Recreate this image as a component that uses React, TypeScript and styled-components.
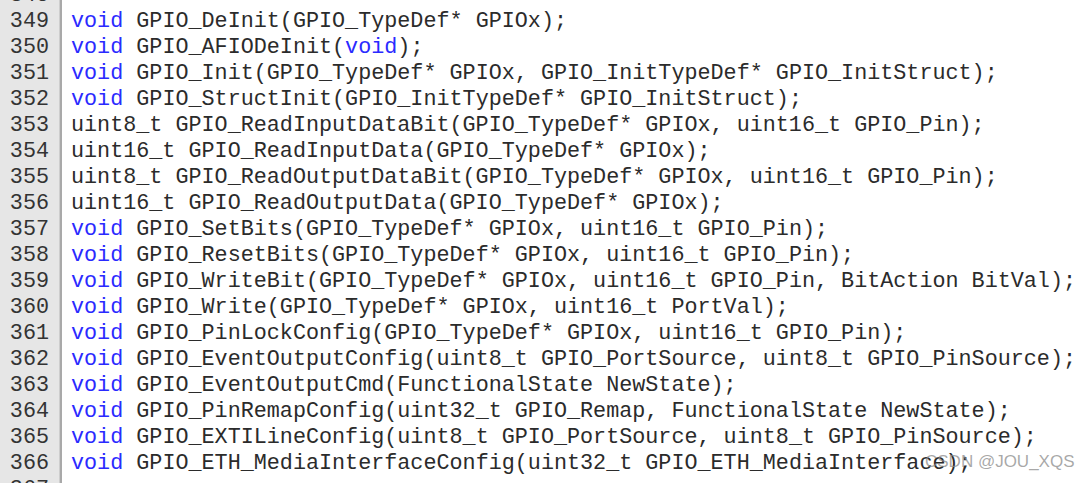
import React from "react";
import styled, { createGlobalStyle } from "styled-components";

const Global = createGlobalStyle`
  html, body {
    margin: 0;
    padding: 0;
    background: #ffffff;
    overflow: hidden;
  }
  *, *::before, *::after {
    box-sizing: border-box;
  }
`;

const Editor = styled.div`
  position: relative;
  width: 1090px;
  height: 483px;
  overflow: hidden;
  display: flex;
  background: #ffffff;
  font-family: "Liberation Mono", "Courier New", monospace;
  font-size: 21.75px;
  line-height: 26px;
`;

const Gutter = styled.div`
  flex: 0 0 60px;
  background: #e6e6e6;
  border-right: 1px solid #cdcdcd;
  display: flex;
  flex-direction: column;
  align-items: flex-end;
  padding-right: 10px;
  color: #333333;
`;

const Separator = styled.div`
  flex: 0 0 2px;
  background: #a9a9a9;
`;

const CodeArea = styled.div`
  flex: 1;
  display: flex;
  flex-direction: column;
  padding-left: 9px;
  color: #2b2b2b;
  white-space: pre;
`;

const Scroll = styled.div<{ $offset: number }>`
  display: flex;
  flex-direction: column;
  margin-top: ${(p) => p.$offset}px;
`;

const LineNo = styled.div`
  height: 26px;
`;

const CodeLine = styled.div`
  height: 26px;
`;

const Keyword = styled.span`
  color: #2a2aff;
`;

const Watermark = styled.div`
  position: absolute;
  left: 925px;
  top: 451px;
  font-family: "Liberation Sans", Arial, sans-serif;
  font-size: 17px;
  line-height: 22px;
  color: rgba(140, 140, 140, 0.75);
  white-space: nowrap;
`;

const lines: string[] = [
  "",
  "void GPIO_DeInit(GPIO_TypeDef* GPIOx);",
  "void GPIO_AFIODeInit(void);",
  "void GPIO_Init(GPIO_TypeDef* GPIOx, GPIO_InitTypeDef* GPIO_InitStruct);",
  "void GPIO_StructInit(GPIO_InitTypeDef* GPIO_InitStruct);",
  "uint8_t GPIO_ReadInputDataBit(GPIO_TypeDef* GPIOx, uint16_t GPIO_Pin);",
  "uint16_t GPIO_ReadInputData(GPIO_TypeDef* GPIOx);",
  "uint8_t GPIO_ReadOutputDataBit(GPIO_TypeDef* GPIOx, uint16_t GPIO_Pin);",
  "uint16_t GPIO_ReadOutputData(GPIO_TypeDef* GPIOx);",
  "void GPIO_SetBits(GPIO_TypeDef* GPIOx, uint16_t GPIO_Pin);",
  "void GPIO_ResetBits(GPIO_TypeDef* GPIOx, uint16_t GPIO_Pin);",
  "void GPIO_WriteBit(GPIO_TypeDef* GPIOx, uint16_t GPIO_Pin, BitAction BitVal);",
  "void GPIO_Write(GPIO_TypeDef* GPIOx, uint16_t PortVal);",
  "void GPIO_PinLockConfig(GPIO_TypeDef* GPIOx, uint16_t GPIO_Pin);",
  "void GPIO_EventOutputConfig(uint8_t GPIO_PortSource, uint8_t GPIO_PinSource);",
  "void GPIO_EventOutputCmd(FunctionalState NewState);",
  "void GPIO_PinRemapConfig(uint32_t GPIO_Remap, FunctionalState NewState);",
  "void GPIO_EXTILineConfig(uint8_t GPIO_PortSource, uint8_t GPIO_PinSource);",
  "void GPIO_ETH_MediaInterfaceConfig(uint32_t GPIO_ETH_MediaInterface);",
  "",
];

const FIRST = 348;

function highlight(text: string): React.ReactNode[] {
  const parts = text.split(/(\bvoid\b)/);
  return parts.map((p, i) =>
    p === "void" ? <Keyword key={i}>void</Keyword> : <React.Fragment key={i}>{p}</React.Fragment>
  );
}

export default function App() {
  const offset = -17;
  return (
    <>
      <Global />
      <Editor>
        <Gutter>
          <Scroll $offset={offset}>
            {lines.map((_, i) => (
              <LineNo key={i}>{FIRST + i}</LineNo>
            ))}
          </Scroll>
        </Gutter>
        <Separator />
        <CodeArea>
          <Scroll $offset={offset}>
            {lines.map((l, i) => (
              <CodeLine key={i}>{highlight(l)}</CodeLine>
            ))}
          </Scroll>
        </CodeArea>
        <Watermark>CSDN @JOU_XQS</Watermark>
      </Editor>
    </>
  );
}
